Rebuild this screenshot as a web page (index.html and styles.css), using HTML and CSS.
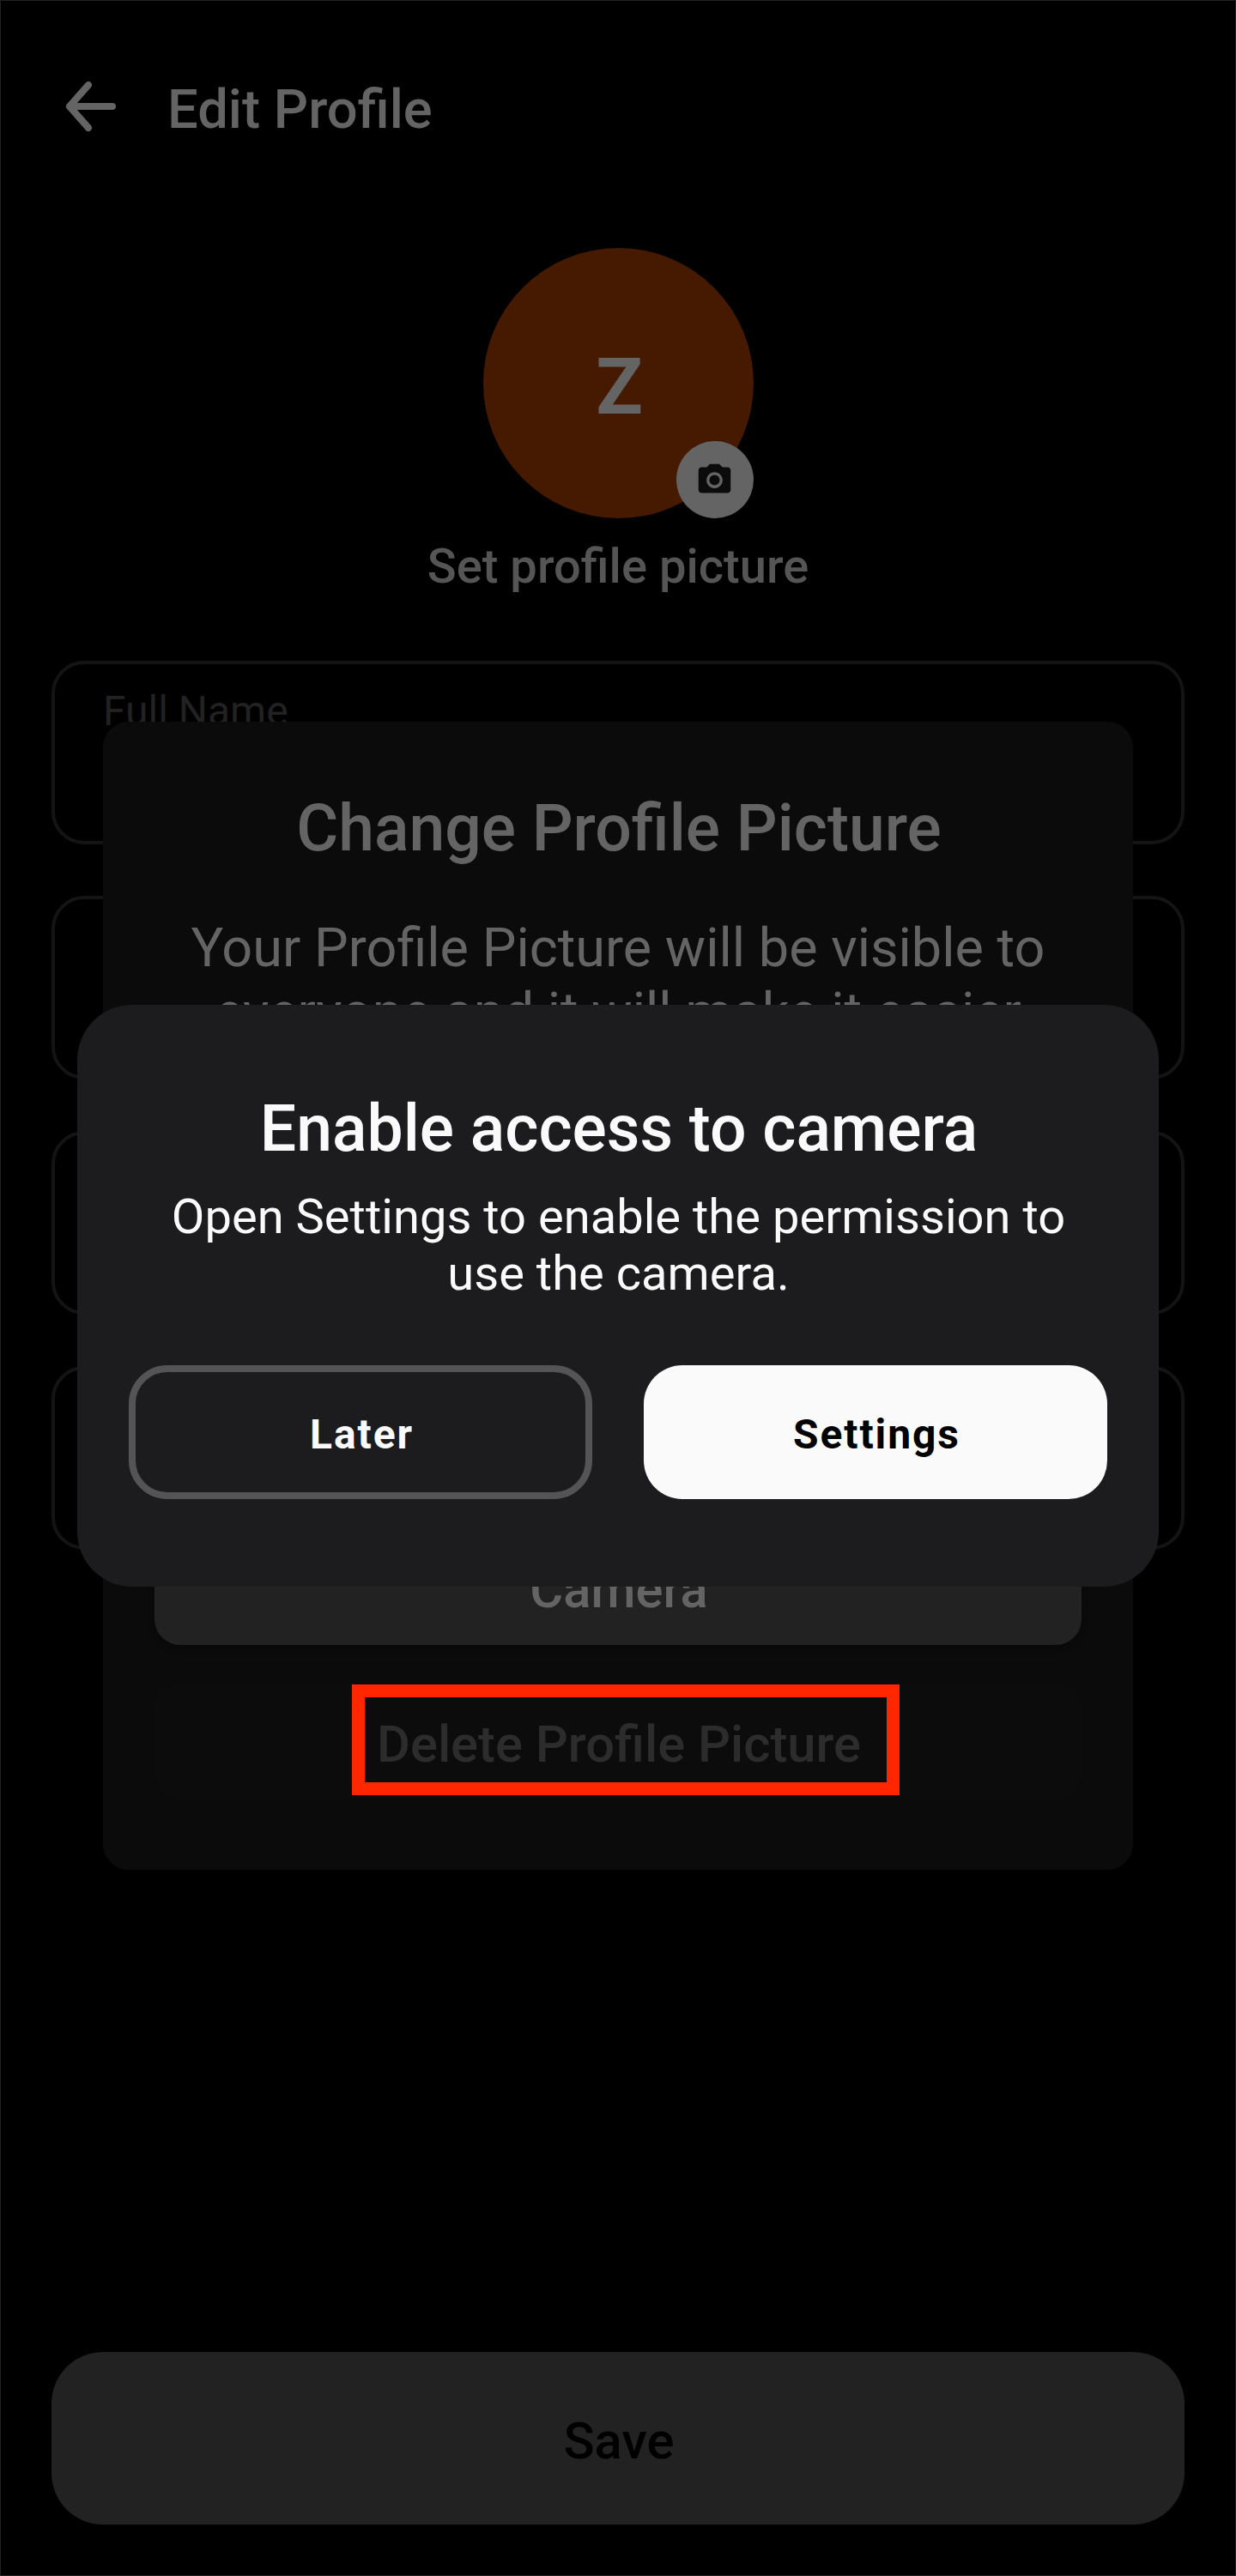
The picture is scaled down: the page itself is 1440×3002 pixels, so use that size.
FILE: index.html
```html
<!DOCTYPE html>
<html lang="en">
<head>
<meta charset="utf-8">
<title>Edit Profile</title>
<link rel="stylesheet" href="styles.css">
</head>
<body>
<div class="screen">
  <header class="header">
    <svg class="back" viewBox="0 0 60 60" fill="none" stroke="currentColor" stroke-width="8" stroke-linecap="round" stroke-linejoin="round">
      <path d="M55 30H5M27 5L5 30l22 25"/>
    </svg>
    <h1 class="header-title">Edit Profile</h1>
  </header>

  <main class="profile">
    <div class="avatar">
      <span>Z</span>
      <div class="avatar-badge">
        <svg class="camera" viewBox="0 0 24 24" fill="currentColor">
          <path fill-rule="evenodd" d="M9 2L7.17 4H4c-1.1 0-2 .9-2 2v12c0 1.1.9 2 2 2h16c1.1 0 2-.9 2-2V6c0-1.1-.9-2-2-2h-3.17L15 2H9zm3 15c-2.76 0-5-2.24-5-5s2.24-5 5-5 5 2.24 5 5-2.24 5-5 5z"/>
          <circle cx="12" cy="12" r="3.2"/>
        </svg>
      </div>
    </div>
    <p class="caption">Set profile picture</p>
    <div class="fields">
      <div class="field">Full Name</div>
      <div class="field"></div>
      <div class="field"></div>
      <div class="field"></div>
    </div>
  </main>

  <button class="save">Save</button>

  <div class="overlay">
    <section class="picker">
      <h2 class="picker-title">Change Profile Picture</h2>
      <p class="picker-text">Your Profile Picture will be visible to<br>everyone and it will make it easier</p>
      <div class="picker-actions">
        <button class="action">Camera</button>
        <button class="action action-delete">Delete Profile Picture<span class="highlight"></span></button>
      </div>
    </section>
  </div>

  <div class="overlay">
    <section class="permission">
      <h2 class="permission-title">Enable access to camera</h2>
      <p class="permission-text">Open Settings to enable the permission to<br>use the camera.</p>
      <div class="permission-actions">
        <button class="btn btn-outline">Later</button>
        <button class="btn btn-solid">Settings</button>
      </div>
    </section>
  </div>
</div>
</body>
</html>
```
FILE: styles.css
```css
* {
  box-sizing: border-box;
  margin: 0;
}

body {
  background: #000;
  font-family: Roboto, sans-serif;
}

button {
  padding: 0;
  border: 0;
  font-family: inherit;
}

.screen {
  position: relative;
  display: flex;
  flex-direction: column;
  width: 1440px;
  height: 3002px;
  padding: 0 59px 59px;
  border: 1px solid #222;
  color: #646464;
}

.header {
  display: flex;
  align-items: center;
  gap: 59px;
  height: 246px;
  padding-left: 16px;
}

.back {
  width: 60px;
  height: 60px;
}

.header-title {
  padding-top: 5px;
  font-size: 63.3px;
  font-weight: 500;
  line-height: 76px;
}

.profile {
  display: flex;
  flex-direction: column;
  align-items: center;
  padding-top: 42px;
}

.avatar {
  position: relative;
  display: flex;
  align-items: center;
  justify-content: center;
  width: 315px;
  height: 315px;
  padding: 9px 0 0 3px;
  border-radius: 50%;
  background: #451a00;
  font-size: 90px;
  font-weight: 700;
}

.avatar-badge {
  position: absolute;
  right: 0;
  bottom: 0;
  display: flex;
  align-items: center;
  justify-content: center;
  width: 90px;
  height: 90px;
  border-radius: 50%;
  background: #646464;
  color: #0b0b0b;
}

.camera {
  width: 45px;
  height: 45px;
}

.caption {
  margin-top: 23px;
  color: #555;
  font-size: 56.1px;
  font-weight: 500;
  line-height: 66px;
}

.fields {
  display: flex;
  flex-direction: column;
  gap: 60.5px;
  width: 100%;
  margin-top: 77px;
}

.field {
  height: 213.5px;
  padding: 27px 56px;
  border: 4px solid #141414;
  border-radius: 38px;
  color: #222;
  font-size: 48px;
  line-height: 56px;
}

.save {
  height: 201px;
  margin-top: auto;
  padding: 6px 0 0 2px;
  border-radius: 60px;
  background: #222;
  color: #000;
  font-size: 59.7px;
  font-weight: 500;
}

.overlay {
  position: absolute;
  inset: 0;
  display: flex;
  align-items: center;
  justify-content: center;
  padding-top: 18px;
}

.picker {
  display: flex;
  flex-direction: column;
  width: 1200px;
  height: 1338px;
  padding: 80px 60px 82px;
  border-radius: 30px;
  background: #0b0b0b;
  text-align: center;
}

.picker-title {
  padding-left: 2px;
  font-size: 75.1px;
  font-weight: 500;
  line-height: 88px;
}

.picker-text {
  margin-top: 58px;
  font-size: 63px;
  line-height: 75px;
}

.picker-actions {
  display: flex;
  flex-direction: column;
  gap: 45px;
  margin-top: auto;
}

.action {
  height: 135px;
  padding: 6px 0 0 2px;
  border-radius: 30px;
  background: #222;
  color: #646464;
  box-shadow: 0 4px 8px rgba(0, 0, 0, 0.3);
  font-size: 59.7px;
  font-weight: 500;
}

.action-delete {
  position: relative;
  background: #0c0c0c;
  color: #2c2c2c;
  box-shadow: none;
}

.highlight {
  position: absolute;
  top: 1px;
  left: 230px;
  width: 638px;
  height: 129px;
  border: 15px solid #ff2600;
}

.permission {
  width: 1260px;
  height: 678px;
  padding: 100px 60px 0;
  border-radius: 64px;
  background: #1c1c1e;
  color: #fafafa;
  text-align: center;
}

.permission-title {
  padding-left: 2px;
  font-size: 75.1px;
  font-weight: 500;
  line-height: 88px;
}

.permission-text {
  margin-top: 26px;
  padding-left: 1px;
  font-size: 56.1px;
  line-height: 66px;
}

.permission-actions {
  display: grid;
  grid-template-columns: 1fr 1fr;
  gap: 60px;
  margin-top: 74px;
}

.btn {
  height: 156px;
  padding: 5px 0 0 3px;
  border-radius: 45px;
  font-size: 48px;
  font-weight: 700;
  letter-spacing: 1.9px;
}

.btn-outline {
  border: 8px solid #545456;
  background: none;
  color: #fafafa;
}

.btn-solid {
  background: #fafafa;
  color: #000;
}
```
